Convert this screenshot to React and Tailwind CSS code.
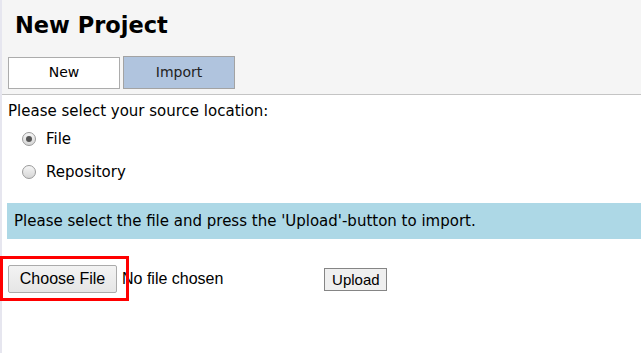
import React from "react";

function Radio({ checked = false, label }) {
  return (
    <label className="flex items-center h-[33px] pl-[20px]">
      <span className="w-[14px] h-[14px] rounded-full border border-[#9a9a9a] bg-gradient-to-b from-[#f6f6f6] to-[#d6d6d6] flex items-center justify-center">
        {checked && <span className="w-[6px] h-[6px] rounded-full bg-[#555]" />}
      </span>
      <span className="ml-[10px] text-[15px] leading-[20px] text-black">{label}</span>
    </label>
  );
}

export default function App() {
  return (
    <div className="relative min-h-screen bg-white border-l-2 border-[#e6e6ef] font-['DejaVu_Sans',sans-serif]">
      <div className="h-[95px] bg-[#f5f5f5] border-b border-[#c4c4c4] pl-[6px]">
        <h1 className="ml-[7px] pt-[14px] text-[22.5px] leading-none font-bold text-black">
          New Project
        </h1>
        <div className="flex items-end gap-[3px] mt-[19px]">
          <button className="w-[112px] h-[32px] bg-white border border-[#acacac] text-[14px] text-black">
            New
          </button>
          <button className="w-[112px] h-[33px] bg-[#b0c4de] border border-[#a3a3a3] text-[14px] text-[#222]">
            Import
          </button>
        </div>
      </div>

      <div className="pt-[6px]">
        <p className="pl-[6px] text-[15px] leading-[20px] text-black">
          Please select your source location:
        </p>
        <div className="pt-[1px]">
          <Radio checked label="File" />
          <Radio label="Repository" />
        </div>

        <div className="ml-[5px] mt-[15px] h-[36px] bg-[#add8e6] flex items-center pl-[7px] text-[15px] text-black">
          Please select the file and press the 'Upload'-button to import.
        </div>

        <div className="flex items-start pl-[6px] pt-[26px] font-['Liberation_Sans',Arial,sans-serif]">
          <button className="h-[28px] w-[109px] rounded-[2px] border border-[#ababab] bg-gradient-to-b from-[#f3f3f3] to-[#e6e6e6] text-[16px] text-black">
            Choose File
          </button>
          <span className="ml-[5px] mt-[4px] text-[16px] leading-[20px] text-black">No file chosen</span>
          <button className="ml-[101px] mt-[3px] h-[23px] w-[63px] border border-[#858585] bg-[#efefef] text-[15px] leading-none text-black">
            Upload
          </button>
        </div>
      </div>

      <div className="absolute left-[-2px] top-[256px] w-[129px] h-[45px] border-[3px] border-[#ff0000] pointer-events-none" />
    </div>
  );
}
